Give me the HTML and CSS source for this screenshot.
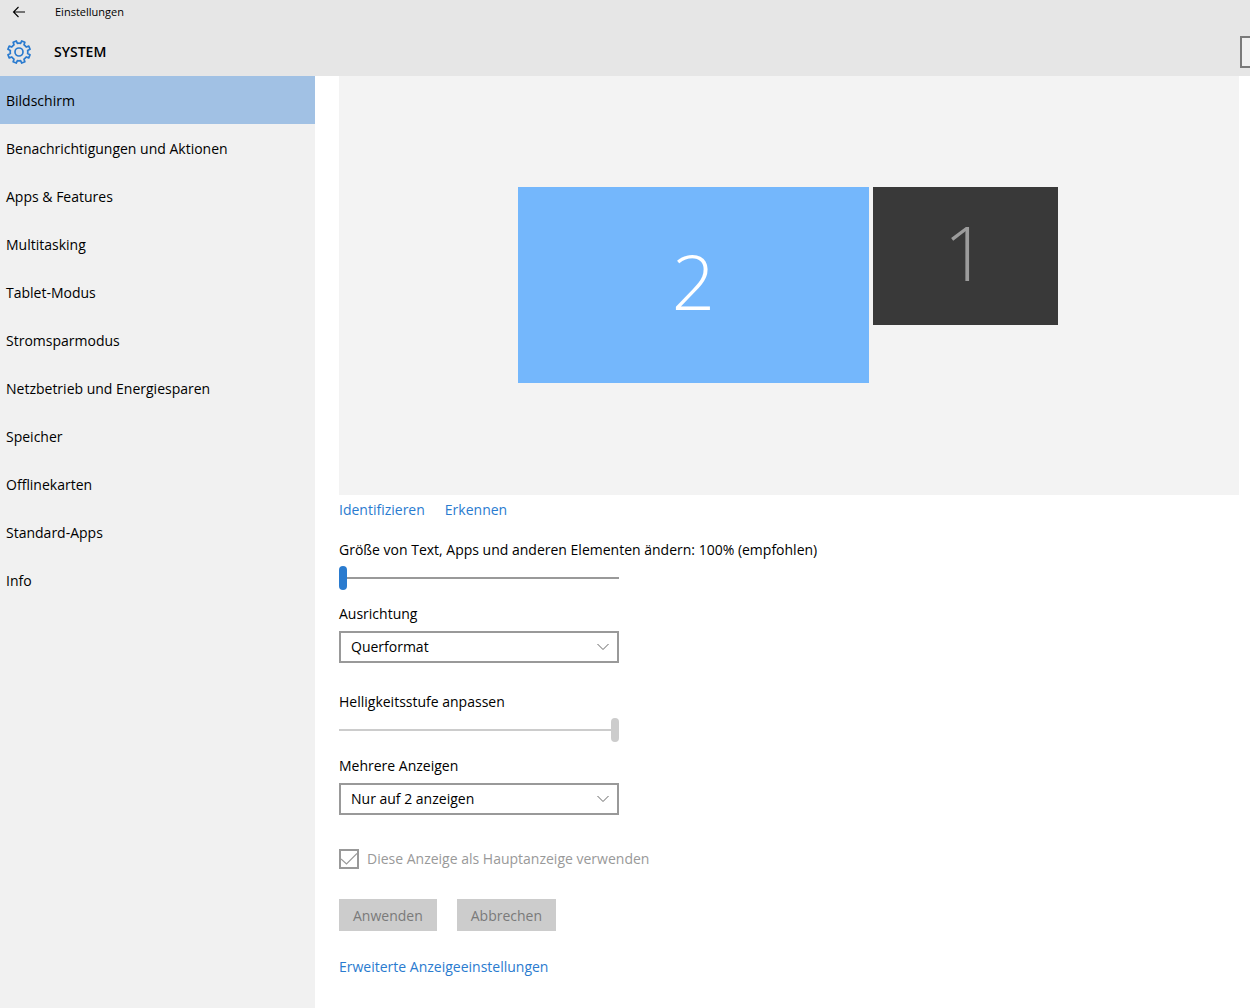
FILE: index.html
```html
<!DOCTYPE html>
<html lang="de">
<head>
  <meta charset="UTF-8" />
  <meta name="viewport" content="width=device-width, initial-scale=1.0"/>
  <title>Einstellungen</title>
  <link rel="stylesheet" href="styles.css">
</head>
<body>
  <header class="header">
    <div class="titlebar">
      <button type="button" class="back-button" aria-label="Zurück">
        <svg width="14" height="12" viewBox="0 0 14 12" fill="none" stroke="currentColor" stroke-width="1.1">
          <path d="M13 6H1.5M6.500 1L1.500 6l5 5"/>
        </svg>
      </button>
      <span class="app-name">Einstellungen</span>
    </div>
    <div class="page-bar">
      <svg class="gear" width="26" height="26" viewBox="-1 -1 26 26" fill="none" stroke="currentColor" stroke-width="1.7" stroke-linejoin="round">
        <path d="M13.6 3.35L14.76.94 17.87 2.23 16.98 4.75A8.8 8.8 0 0 1 19.25 7.02L21.77 6.13 23.06 9.24 20.65 10.4A8.8 8.8 0 0 1 20.65 13.6L23.06 14.76 21.77 17.87 19.25 16.98A8.8 8.8 0 0 1 16.98 19.25L17.87 21.77 14.76 23.06 13.6 20.65A8.8 8.8 0 0 1 10.4 20.65L9.24 23.06 6.13 21.77 7.02 19.25A8.8 8.8 0 0 1 4.75 16.98L2.23 17.87.94 14.76 3.35 13.6A8.8 8.8 0 0 1 3.35 10.4L.94 9.24 2.23 6.13 4.75 7.02A8.8 8.8 0 0 1 7.02 4.75L6.13 2.23 9.24.94 10.4 3.35A8.8 8.8 0 0 1 13.6 3.35Z"/>
        <circle cx="12" cy="12" r="4"/>
      </svg>
      <h1>SYSTEM</h1>
      <input type="search" class="search" aria-label="Einstellung suchen">
    </div>
  </header>

  <div class="layout">
    <nav class="sidebar">
      <a href="#" class="active" aria-current="page">Bildschirm</a>
      <a href="#">Benachrichtigungen und Aktionen</a>
      <a href="#">Apps &amp; Features</a>
      <a href="#">Multitasking</a>
      <a href="#">Tablet-Modus</a>
      <a href="#">Stromsparmodus</a>
      <a href="#">Netzbetrieb und Energiesparen</a>
      <a href="#">Speicher</a>
      <a href="#">Offlinekarten</a>
      <a href="#">Standard-Apps</a>
      <a href="#">Info</a>
    </nav>

    <main class="content">
      <div class="displays">
        <button type="button" class="monitor monitor-large">2</button>
        <button type="button" class="monitor monitor-small">1</button>
      </div>

      <div class="links">
        <a href="#">Identifizieren</a>
        <a href="#">Erkennen</a>
      </div>

      <div class="field">
        <label for="scale">Größe von Text, Apps und anderen Elementen ändern: 100% (empfohlen)</label>
        <input type="range" id="scale" min="100" max="175" step="25" value="100">
      </div>

      <div class="field">
        <label for="orientation">Ausrichtung</label>
        <select id="orientation">
          <option>Querformat</option>
          <option>Hochformat</option>
        </select>
      </div>

      <div class="field field-group">
        <label for="brightness">Helligkeitsstufe anpassen</label>
        <input type="range" id="brightness" min="0" max="100" value="100" disabled>
      </div>

      <div class="field">
        <label for="multiple">Mehrere Anzeigen</label>
        <select id="multiple">
          <option>Nur auf 2 anzeigen</option>
          <option>Nur auf 1 anzeigen</option>
        </select>
      </div>

      <div class="check">
        <input type="checkbox" id="primary" checked disabled>
        <label for="primary">Diese Anzeige als Hauptanzeige verwenden</label>
      </div>

      <div class="actions">
        <button type="button" disabled>Anwenden</button>
        <button type="button" disabled>Abbrechen</button>
      </div>

      <a href="#" class="advanced">Erweiterte Anzeigeeinstellungen</a>
    </main>
  </div>
</body>
</html>
```
FILE: styles.css
```css
* {
  box-sizing: border-box;
}

body {
  margin: 0;
  font-family: 'Segoe UI', 'Open Sans', sans-serif;
  font-size: 14px;
  line-height: 20px;
  color: #000;
  background-color: #fff;
  display: flex;
  flex-direction: column;
  min-height: 100vh;
}

button, input, select {
  font: inherit;
  margin: 0;
}

a {
  color: #2a7bcf;
  text-decoration: none;
}

.header {
  background-color: #e6e6e6;
  overflow: hidden;
}

.titlebar {
  display: flex;
  align-items: center;
  height: 24px;
}

.back-button {
  width: 38px;
  height: 24px;
  padding: 0;
  border: none;
  background: none;
  color: #000;
  display: flex;
  align-items: center;
  justify-content: center;
}

.app-name {
  margin-left: 17px;
  font-size: 11px;
}

.page-bar {
  display: flex;
  align-items: center;
  height: 52px;
  padding: 4px 0 0 6px;
}

.gear {
  color: #2a7bcf;
}

h1 {
  flex: 1;
  margin: 0 0 0 22px;
  font-size: 14px;
  font-weight: 600;
}

/* search box runs past the right edge of the window */
.search {
  width: 240px;
  height: 32px;
  margin-right: -230px;
  padding: 0 8px;
  border: 2px solid #7a7a7a;
  border-radius: 0;
  background-color: #f0f0f0;
  flex-shrink: 0;
  appearance: none;
}

.layout {
  flex: 1;
  display: flex;
}

.sidebar {
  width: 315px;
  flex-shrink: 0;
  background-color: #f1f1f1;
}

.sidebar a {
  display: block;
  padding: 15px 6px 13px;
  color: #000;
}

.sidebar .active {
  background-color: #a1c1e4;
}

.content {
  flex: 1;
  padding: 0 11px 24px 24px;
}

.displays {
  display: flex;
  justify-content: center;
  gap: 4px;
  padding: 111px 2px 112px 0;
  background-color: #f3f3f3;
}

.monitor {
  padding: 0 0 8px;
  border: none;
  font-size: 76px;
  font-weight: 300;
  line-height: 1;
}

.monitor-large {
  width: 351px;
  height: 196px;
  background-color: #74b7fc;
  color: #fff;
}

.monitor-small {
  width: 185px;
  height: 138px;
  background-color: #393939;
  color: #9c9c9c;
}

.links {
  display: flex;
  gap: 20px;
  padding: 5px 0 20px;
}

.field {
  display: flex;
  flex-direction: column;
  align-items: flex-start;
  gap: 6px;
  margin-bottom: 14px;
}

.field-group {
  margin-top: 29px;
}

select {
  width: 280px;
  height: 32px;
  margin-top: 1px;
  padding: 0 30px 0 10px;
  border: 2px solid #999;
  border-radius: 0;
  color: #000;
  background: #fff url("data:image/svg+xml,%3Csvg xmlns='http://www.w3.org/2000/svg' width='12' height='8' viewBox='0 0 12 8'%3E%3Cpath d='M.5 1L6 6.5 11.5 1' fill='none' stroke='%23666'/%3E%3C/svg%3E") no-repeat right 8px center;
  appearance: none;
}

input[type="range"] {
  width: 280px;
  height: 24px;
  background: linear-gradient(#999, #999) no-repeat center / 100% 2px;
  appearance: none;
}

input[type="range"]::-webkit-slider-thumb {
  width: 8px;
  height: 24px;
  border-radius: 4px;
  background-color: #2a7bcf;
  appearance: none;
}

input[type="range"]:disabled {
  background-image: linear-gradient(#ccc, #ccc);
}

input[type="range"]:disabled::-webkit-slider-thumb {
  background-color: #ccc;
}

.check {
  display: flex;
  align-items: center;
  gap: 8px;
  margin-top: 34px;
  color: #999;
}

.check input {
  width: 20px;
  height: 20px;
  border: 2px solid #999;
  appearance: none;
}

.check input:checked {
  background: url("data:image/svg+xml,%3Csvg xmlns='http://www.w3.org/2000/svg' width='16' height='16' viewBox='0 0 16 16'%3E%3Cpath d='M0 8l5.5 5L16 2.5' fill='none' stroke='%23999' stroke-width='1.2'/%3E%3C/svg%3E") no-repeat center;
}

.actions {
  display: flex;
  gap: 20px;
  margin: 30px 0 26px;
}

.actions button {
  height: 32px;
  padding: 2px 14px 0;
  border: none;
  background-color: #ccc;
  color: #7a7a7a;
}
```
